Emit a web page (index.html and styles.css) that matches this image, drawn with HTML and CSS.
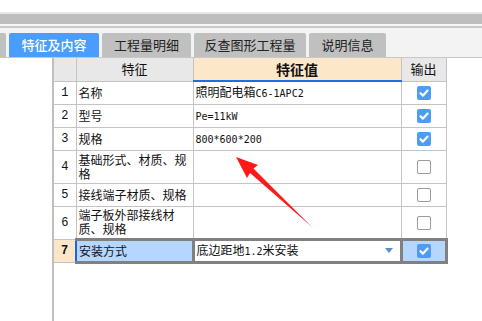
FILE: index.html
```html
<!DOCTYPE html>
<html>
<head>
<meta charset="utf-8">
<link rel="stylesheet" href="styles.css">
</head>
<body>
<div class="page">
  <div class="top-white"></div>
  <div class="band band1"></div>
  <div class="band band2"></div>
  <div class="band band3"></div>
  <div class="band band4"></div>
  <div class="tabbar">
    <div class="tab tab-partial"></div>
    <div class="tab tab-active w1">特征及内容</div>
    <div class="tab w2">工程量明细</div>
    <div class="tab w3">反查图形工程量</div>
    <div class="tab w4">说明信息</div>
  </div>
  <div class="content">
    <div class="gutter"></div>
    <div class="vline"></div>
    <table class="grid">
      <colgroup>
        <col class="c-num"><col class="c-feat"><col class="c-val"><col class="c-out">
      </colgroup>
      <tr class="head">
        <td class="hnum"></td>
        <td class="hfeat">特征</td>
        <td class="hval">特征值</td>
        <td class="hout">输出</td>
      </tr>
      <tr>
        <td class="num">1</td><td class="feat">名称</td>
        <td class="val">照明配电箱<span class="lat">C6-1APC2</span></td>
        <td class="out"><span class="cb on"><svg viewBox="0 0 14 14" width="14" height="14"><path d="M3.5 7.2 L6 9.6 L10.6 4.6" fill="none" stroke="#fff" stroke-width="2.2" stroke-linecap="round" stroke-linejoin="round"/></svg></span></td>
      </tr>
      <tr>
        <td class="num">2</td><td class="feat">型号</td>
        <td class="val"><span class="lat">Pe=11kW</span></td>
        <td class="out"><span class="cb on"><svg viewBox="0 0 14 14" width="14" height="14"><path d="M3.5 7.2 L6 9.6 L10.6 4.6" fill="none" stroke="#fff" stroke-width="2.2" stroke-linecap="round" stroke-linejoin="round"/></svg></span></td>
      </tr>
      <tr>
        <td class="num">3</td><td class="feat">规格</td>
        <td class="val"><span class="lat">800*600*200</span></td>
        <td class="out"><span class="cb on"><svg viewBox="0 0 14 14" width="14" height="14"><path d="M3.5 7.2 L6 9.6 L10.6 4.6" fill="none" stroke="#fff" stroke-width="2.2" stroke-linecap="round" stroke-linejoin="round"/></svg></span></td>
      </tr>
      <tr class="tall">
        <td class="num">4</td><td class="feat">基础形式、材质、规格</td>
        <td class="val"></td>
        <td class="out"><span class="cb"></span></td>
      </tr>
      <tr>
        <td class="num">5</td><td class="feat">接线端子材质、规格</td>
        <td class="val"></td>
        <td class="out"><span class="cb"></span></td>
      </tr>
      <tr class="tall">
        <td class="num">6</td><td class="feat">端子板外部接线材质、规格</td>
        <td class="val"></td>
        <td class="out"><span class="cb"></span></td>
      </tr>
      <tr class="sel">
        <td class="num snum">7</td><td class="feat sfeat">安装方式</td>
        <td class="val sval"><div class="combo"><span>底边距地<span class="lat">1.2</span>米安装</span><span class="tri"></span></div></td>
        <td class="out sout"><span class="cb on"><svg viewBox="0 0 14 14" width="14" height="14"><path d="M3.5 7.2 L6 9.6 L10.6 4.6" fill="none" stroke="#fff" stroke-width="2.2" stroke-linecap="round" stroke-linejoin="round"/></svg></span></td>
      </tr>
    </table>
  </div>
  <svg class="arrow" width="482" height="321" viewBox="0 0 482 321">
    <polygon points="236,157 258,165 253.5,168.5 312,227 250,173 247,178" fill="#ff1a1a"/>
  </svg>
</div>
</body>
</html>
```
FILE: styles.css
```css
* { box-sizing: border-box; }
html, body { margin: 0; padding: 0; background: #fff; }
body { font-family: "Noto Sans CJK SC", "Noto Sans", sans-serif; width: 482px; height: 321px; overflow: hidden; }
.page { position: relative; width: 482px; height: 321px; }
.top-white { height: 12px; background: #fff; }
.band1 { height: 2px; background: #e6e6e6; }
.band2 { height: 10px; background: #bebebe; }
.band3 { height: 2px; background: #f7f7f7; }
.band4 { height: 2px; background: #c9c9c9; }
.tabbar {
  height: 30px;
  background: #f3f3f3;
  border-bottom: 1px solid #c8c8c8;
  display: flex;
  align-items: flex-end;
  gap: 3px;
}
.tab {
  height: 24px;
  background: #c0c0c0;
  border-radius: 2px 2px 0 0;
  color: #222;
  font-size: 13px;
  line-height: 24px;
  text-align: center;
  flex: none;
}
.tab-partial { width: 6px; border-radius: 0 2px 0 0; }
.tab-active { background: #4a9cfd; color: #fff; font-weight: 500; }
.w1 { width: 90px; }
.w2 { width: 89px; }
.w3 { width: 112px; }
.w4 { width: 77px; }
.content { display: flex; height: 263px; }
.gutter { width: 52px; flex: none; }
.vline { width: 2px; background: #c0c0c0; flex: none; }
.grid {
  border-collapse: collapse;
  table-layout: fixed;
  width: 392px;
  align-self: flex-start;
  font-size: 12px;
  color: #111;
}
.c-num { width: 22px; }
.c-feat { width: 117px; }
.c-val { width: 208px; }
.c-out { width: 45px; }
.grid td {
  border: 1px solid #c4c4c4;
  height: 23px;
  padding: 0 2px;
  line-height: 14px;
  vertical-align: middle;
  overflow: hidden;
}
.grid tr:first-child td { border-top: none; }
.grid td:first-child { border-left: none; }
.head td { background: #e8e8e8; text-align: center; font-size: 13px; }
.head .hval { background: #fde7c9; font-weight: bold; font-size: 14px; border-bottom: 2px solid #1a6fe6; }
.num { text-align: center; font-family: "Liberation Mono", monospace; font-size: 12px; }
.feat { white-space: normal; }
.tall td { height: 33px; }
.lat { font-family: "DejaVu Sans Mono", monospace; font-size: 10px; }
.out { text-align: center; }
.cb {
  display: inline-block;
  width: 14px; height: 14px;
  border: 1px solid #9a9a9a;
  border-radius: 2px;
  background: #fff;
  vertical-align: middle;
}
.cb.on { border: none; background: #4d9df4; }
.cb svg { display: block; }
.sel td { border: 3px solid #808080; }
.sel .snum { background: #fde6c8; font-weight: bold; border: 1px solid #c4c4c4; border-left: none; }
.sel .sfeat { background: #b5d6ff; border-left: 2px solid #1a66e0; }
.sel .sval { background: #fff; }
.sel .sout { background: #b5d6ff; }
.combo { display: flex; justify-content: space-between; align-items: center; padding-right: 5px; }
.tri {
  width: 0; height: 0;
  border-left: 4px solid transparent;
  border-right: 4px solid transparent;
  border-top: 5px solid #5b8fc9;
}
.arrow { position: absolute; left: 0; top: 0; pointer-events: none; }
```
